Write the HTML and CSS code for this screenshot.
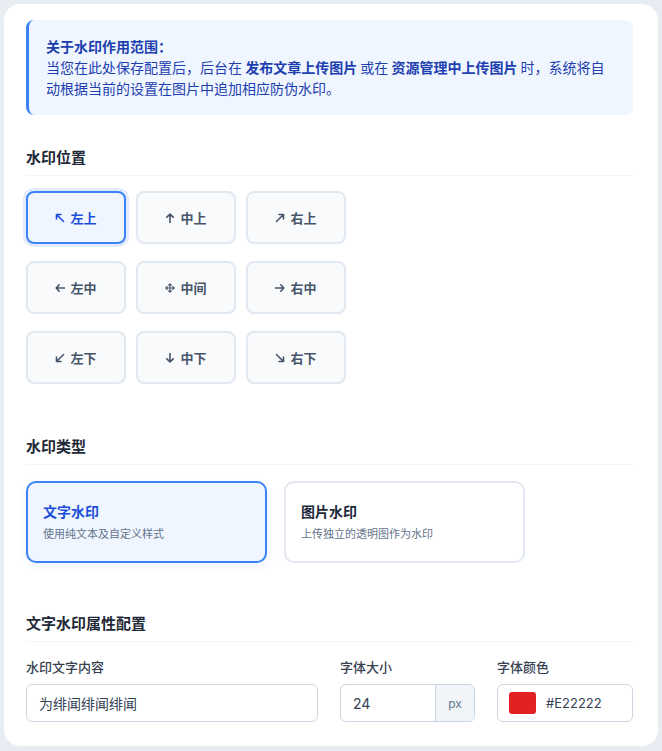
FILE: index.html
```html
<!DOCTYPE html>
<html lang="zh">
<head>
<meta charset="utf-8">
<link rel="stylesheet" href="styles.css">
</head>
<body>
<div class="card">
  <div class="notice">
    <div class="notice-title">关于水印作用范围：</div>
    <div class="notice-text">当您在此处保存配置后，后台在 <b>发布文章上传图片</b> 或在 <b>资源管理中上传图片</b> 时，系统将自动根据当前的设置在图片中追加相应防伪水印。</div>
  </div>

  <div class="section first">
    <div class="section-title">水印位置</div>
    <div class="pos-grid">
      <div class="pos active"><svg class="ar" viewBox="0 0 10 10"><path d="M8.5 8.5L1.8 1.8M1.5 6V1.5H6"/></svg>左上</div>
      <div class="pos"><svg class="ar" viewBox="0 0 10 10"><path d="M5 9.5V1.2M1.8 4.2L5 1.2L8.2 4.2"/></svg>中上</div>
      <div class="pos"><svg class="ar" viewBox="0 0 10 10"><path d="M1.5 8.5L8.2 1.8M4 1.5H8.5V6"/></svg>右上</div>
      <div class="pos"><svg class="ar" viewBox="0 0 10 10"><path d="M9.5 5H1.2M4.2 1.8L1.2 5L4.2 8.2"/></svg>左中</div>
      <div class="pos"><svg class="ar thin" viewBox="0 0 10 10"><path d="M5 0.8V9.2M0.8 5H9.2M3.6 2.2L5 0.8L6.4 2.2M3.6 7.8L5 9.2L6.4 7.8M2.2 3.6L0.8 5L2.2 6.4M7.8 3.6L9.2 5L7.8 6.4"/></svg>中间</div>
      <div class="pos"><svg class="ar" viewBox="0 0 10 10"><path d="M0.5 5H8.8M5.8 1.8L8.8 5L5.8 8.2"/></svg>右中</div>
      <div class="pos"><svg class="ar" viewBox="0 0 10 10"><path d="M8.5 1.5L1.8 8.2M1.5 4V8.5H6"/></svg>左下</div>
      <div class="pos"><svg class="ar" viewBox="0 0 10 10"><path d="M5 0.5V8.8M1.8 5.8L5 8.8L8.2 5.8"/></svg>中下</div>
      <div class="pos"><svg class="ar" viewBox="0 0 10 10"><path d="M1.5 1.5L8.2 8.2M4 8.5H8.5V4"/></svg>右下</div>
    </div>
  </div>

  <div class="section second">
    <div class="section-title">水印类型</div>
    <div class="type-row">
      <div class="type active">
        <div class="type-title">文字水印</div>
        <div class="type-desc">使用纯文本及自定义样式</div>
      </div>
      <div class="type">
        <div class="type-title">图片水印</div>
        <div class="type-desc">上传独立的透明图作为水印</div>
      </div>
    </div>
  </div>

  <div class="section third">
    <div class="section-title">文字水印属性配置</div>
    <div class="form-grid">
      <div class="field">
        <div class="label">水印文字内容</div>
        <div class="input">为绯闻绯闻绯闻</div>
      </div>
      <div class="field">
        <div class="label">字体大小</div>
        <div class="input group">
          <span class="val">24</span>
          <span class="addon">px</span>
        </div>
      </div>
      <div class="field">
        <div class="label">字体颜色</div>
        <div class="input color">
          <span class="swatch"></span>
          <span class="hex">#E22222</span>
        </div>
      </div>
    </div>
  </div>
</div>
</body>
</html>
```

FILE: styles.css
```css
* { box-sizing: border-box; }
html, body { margin: 0; }
body {
  background: #e8edf3;
  padding: 4px;
  font-family: "Noto Sans CJK SC", "Inter", "Noto Sans", sans-serif;
  color: #1f2937;
  width: 662px;
  height: 751px;
  overflow: hidden;
}
.card {
  background: #ffffff;
  border-radius: 16px;
  width: 654px;
  height: 742px;
  padding: 16px 25px 24px 22px;
}
.notice {
  background: #eff6ff;
  border-left: 3px solid #3b82f6;
  border-radius: 8px;
  padding: 16px 20px 16px 17px;
  font-size: 14px;
  line-height: 21px;
  color: #1e40af;
}
.notice-title { font-weight: 700; }
.notice-text b { font-weight: 700; }

.section.first { margin-top: 31px; }
.section.second { margin-top: 51px; }
.section.third { margin-top: 49px; }
.section-title {
  font-size: 15px;
  font-weight: 700;
  color: #1f2937;
  line-height: 22px;
  padding-bottom: 7px;
  border-bottom: 1px solid #f1f5f9;
  margin-bottom: 15px;
}
.section.second .section-title { margin-bottom: 16px; }
.section.third .section-title { margin-bottom: 16px; }
.pos-grid {
  display: grid;
  grid-template-columns: repeat(3, 100px);
  column-gap: 10px;
  row-gap: 17px;
}
.pos {
  height: 53px;
  background: #f8fafc;
  border: 2px solid #e2e8f0;
  border-radius: 8px;
  display: flex;
  align-items: center;
  justify-content: center;
  font-size: 13px;
  font-weight: 600;
  color: #475569;
}
.pos .ar {
  width: 10px;
  height: 10px;
  margin-right: 5px;
  fill: none;
  stroke: currentColor;
  stroke-width: 1.6;
  stroke-linecap: round;
  stroke-linejoin: round;
}
.pos .ar.thin { stroke-width: 1.2; }
.pos.active {
  background: #eff6ff;
  border-color: #3b82f6;
  color: #1d4ed8;
  box-shadow: 0 0 0 3px rgba(59, 130, 246, 0.15);
}
.type-row {
  display: flex;
  gap: 17px;
}
.type {
  width: 241px;
  height: 82px;
  border: 2px solid #e2e8f0;
  border-radius: 10px;
  background: #ffffff;
  padding: 18px 15px;
}
.type.active {
  background: #eff6ff;
  border-color: #3b82f6;
  box-shadow: 0 4px 10px rgba(59, 130, 246, 0.08);
}
.type-title {
  font-size: 14px;
  font-weight: 700;
  color: #1e293b;
  line-height: 20px;
}
.type.active .type-title { color: #1d4ed8; }
.type-desc {
  font-size: 11px;
  color: #64748b;
  line-height: 16px;
  margin-top: 4px;
}
.form-grid {
  display: grid;
  grid-template-columns: 292px 135px 136px;
  column-gap: 22px;
}
.label {
  font-size: 13px;
  font-weight: 500;
  color: #374151;
  line-height: 18px;
  margin-bottom: 8px;
}
.input {
  height: 38px;
  border: 1px solid #cbd5e1;
  border-radius: 6px;
  padding: 0 12px;
  display: flex;
  align-items: center;
  font-size: 14px;
  color: #334155;
  background: #ffffff;
}
.input.group { padding: 0; overflow: hidden; }
.input.group .val {
  flex: 1;
  padding-left: 12px;
  font-family: "Inter", "Noto Sans", sans-serif;
}
.input.group .addon {
  width: 39px;
  height: 100%;
  background: #f1f5f9;
  border-left: 1px solid #cbd5e1;
  display: flex;
  align-items: center;
  justify-content: center;
  font-size: 12px;
  color: #64748b;
  font-family: "Inter", "Noto Sans", sans-serif;
}
.input.color { padding-left: 11px; }
.swatch {
  width: 27px;
  height: 22px;
  background: #e22222;
  border-radius: 3px;
  margin-right: 10px;
}
.hex {
  font-size: 13px;
  font-family: "Inter", "Noto Sans", sans-serif;
  color: #334155;
}
```
